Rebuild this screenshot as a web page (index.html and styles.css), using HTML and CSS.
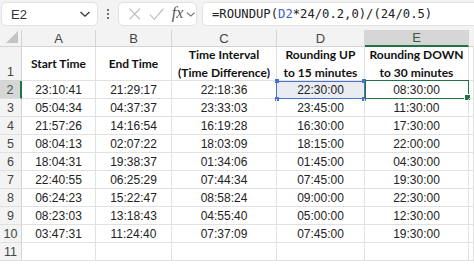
FILE: index.html
```html
<!DOCTYPE html>
<html>
<head>
<meta charset="utf-8">
<link rel="stylesheet" href="styles.css">
</head>
<body>
<div class="topbar">
  <div class="namebox">
    <span class="ref">E2</span>
    <svg class="chev" width="12" height="8" viewBox="0 0 12 8"><path d="M1.5 2 L6 6.2 L10.5 2" fill="none" stroke="#333" stroke-width="1.3"/></svg>
  </div>
  <div class="dots"><span></span><span></span><span></span></div>
  <div class="fxbox">
    <svg width="14" height="14" viewBox="0 0 14 14"><path d="M1.5 1.5 L12.5 12.5 M12.5 1.5 L1.5 12.5" stroke="#b5b5b5" stroke-width="1.1" fill="none"/></svg>
    <svg width="16" height="14" viewBox="0 0 16 14"><path d="M1 7.5 L5.5 12.5 L15 1.5" stroke="#b5b5b5" stroke-width="1.1" fill="none"/></svg>
    <span class="fx">fx</span>
    <svg class="chev2" width="10" height="7" viewBox="0 0 10 7"><path d="M1 1.5 L5 5.2 L9 1.5" fill="none" stroke="#666" stroke-width="1.1"/></svg>
  </div>
  <div class="formula">=ROUNDUP(<span class="blue">D2</span>*24/0.2,0)/(24/0.5)</div>
</div>
<div class="sheet">
  <div class="hd corner"><svg width="14" height="14" viewBox="0 0 14 14"><path d="M13 1 L13 13 L1 13 Z" fill="#c4c4c4"/></svg></div>
  <div class="hd col">A</div>
  <div class="hd col">B</div>
  <div class="hd col">C</div>
  <div class="hd col">D</div>
  <div class="hd col sel">E</div>
  <div class="hd col blank"></div>

  <div class="hd row r1">1</div>
  <div class="c h">Start Time</div>
  <div class="c h">End Time</div>
  <div class="c h">Time Interval<br>(Time Difference)</div>
  <div class="c h">Rounding UP<br>to 15 minutes</div>
  <div class="c h">Rounding DOWN<br>to 30 minutes</div>
  <div class="c"></div>

  <div class="hd row rsel">2</div>
  <div class="c">23:10:41</div><div class="c">21:29:17</div><div class="c">22:18:36</div>
  <div class="c dsel">22:30:00</div><div class="c esel">08:30:00</div><div class="c"></div>

  <div class="hd row">3</div>
  <div class="c">05:04:34</div><div class="c">04:37:37</div><div class="c">23:33:03</div>
  <div class="c">23:45:00</div><div class="c">11:30:00</div><div class="c"></div>

  <div class="hd row">4</div>
  <div class="c">21:57:26</div><div class="c">14:16:54</div><div class="c">16:19:28</div>
  <div class="c">16:30:00</div><div class="c">17:30:00</div><div class="c"></div>

  <div class="hd row">5</div>
  <div class="c">08:04:13</div><div class="c">02:07:22</div><div class="c">18:03:09</div>
  <div class="c">18:15:00</div><div class="c">22:00:00</div><div class="c"></div>

  <div class="hd row">6</div>
  <div class="c">18:04:31</div><div class="c">19:38:37</div><div class="c">01:34:06</div>
  <div class="c">01:45:00</div><div class="c">04:30:00</div><div class="c"></div>

  <div class="hd row">7</div>
  <div class="c">22:40:55</div><div class="c">06:25:29</div><div class="c">07:44:34</div>
  <div class="c">07:45:00</div><div class="c">19:30:00</div><div class="c"></div>

  <div class="hd row">8</div>
  <div class="c">06:24:23</div><div class="c">15:22:47</div><div class="c">08:58:24</div>
  <div class="c">09:00:00</div><div class="c">22:30:00</div><div class="c"></div>

  <div class="hd row">9</div>
  <div class="c">08:23:03</div><div class="c">13:18:43</div><div class="c">04:55:40</div>
  <div class="c">05:00:00</div><div class="c">12:30:00</div><div class="c"></div>

  <div class="hd row">10</div>
  <div class="c">03:47:31</div><div class="c">11:24:40</div><div class="c">07:37:09</div>
  <div class="c">07:45:00</div><div class="c">19:30:00</div><div class="c"></div>

  <div class="hd row">11</div>
  <div class="c"></div><div class="c"></div><div class="c"></div>
  <div class="c"></div><div class="c"></div><div class="c"></div>
</div>
</body>
</html>
```
FILE: styles.css
```css
html, body {
  margin: 0;
  padding: 0;
  background: #ffffff;
  overflow: hidden;
}
body {
  width: 474px;
  height: 265px;
  font-family: "Liberation Sans", Arial, sans-serif;
  color: #222;
}
.topbar {
  height: 30px;
  box-sizing: border-box;
  background: #f3f3f3;
  display: flex;
  align-items: flex-start;
  padding-top: 2px;
}
.namebox, .fxbox, .formula {
  height: 24px;
  box-sizing: border-box;
  background: #fff;
  border: 1px solid #e2e2e2;
  border-radius: 5px;
  display: flex;
  align-items: center;
}
.namebox {
  margin-left: 1px;
  width: 97px;
  padding: 0 6px 0 9px;
  justify-content: space-between;
  font-size: 13px;
  color: #333;
}
.dots {
  width: 20px;
  height: 24px;
  display: flex;
  flex-direction: column;
  align-items: center;
  justify-content: center;
  gap: 2px;
}
.dots span {
  width: 2px;
  height: 2px;
  background: #444;
  border-radius: 1px;
}
.fxbox {
  width: 79px;
  padding: 0 0 0 9px;
  gap: 8px;
}
.fx {
  font-family: "Liberation Serif", "Times New Roman", serif;
  font-style: italic;
  font-size: 16px;
  color: #555;
  margin-left: -1px;
  margin-top: -2px;
}
.chev2 { margin-left: -5px; }
.formula {
  margin-left: 5px;
  flex: 1;
  border-right: none;
  border-radius: 5px 0 0 5px;
  padding-left: 9px;
  font-family: "DejaVu Sans Mono", "Liberation Mono", monospace;
  font-size: 12.2px;
  color: #222;
  white-space: nowrap;
  overflow: hidden;
}
.blue { color: #3b63c9; }

.sheet {
  display: grid;
  grid-template-columns: 22px 74px 76px 105px 88px 104px 5px;
  grid-template-rows: 17px 34px repeat(10, 18px);
}
.hd {
  background: #f3f3f3;
  color: #444;
  box-sizing: border-box;
  border-right: 1px solid #d4d4d4;
  border-bottom: 1px solid #d4d4d4;
  font-size: 13px;
  display: flex;
  align-items: center;
  justify-content: center;
}
.corner {
  align-items: flex-end;
  justify-content: flex-end;
  padding: 0 2px 2px 0;
}
.col.sel {
  background: #d6d6d6;
  color: #3d5a48;
  border-bottom: 2px solid #217346;
}
.col.blank { border-right: none; }
.row {
  font-size: 12.5px;
  align-items: flex-end;
  padding-bottom: 1px;
  border-bottom-color: #e0e0e0;
}
.row.r1 { border-bottom-color: #d4d4d4; }
.row.rsel {
  background: #d6d6d6;
  color: #3d5a48;
  border-right: 2px solid #217346;
}
.c {
  box-sizing: border-box;
  border-right: 1px solid #e1e1e1;
  border-bottom: 1px solid #e1e1e1;
  font-size: 12px;
  display: flex;
  align-items: center;
  justify-content: center;
  text-align: center;
  white-space: nowrap;
  padding-top: 1px;
  position: relative;
}
.c.h {
  font-family: "Lato", "Liberation Sans", sans-serif;
  font-weight: 700;
  font-size: 12px;
  line-height: 18px;
  color: #111;
  padding-top: 0;
}
.dsel { background: #e9ecf3; }
.dsel::before {
  content: "";
  position: absolute;
  inset: 0 -1px -1px -1px;
  border: 1px solid #4a74c9;
}
.dsel::after {
  content: "";
  position: absolute;
  left: -2px;
  top: -2px;
  width: 4px;
  height: 4px;
  background: #4a74c9;
  box-shadow: 87px 0 0 #4a74c9, 0 18px 0 #4a74c9, 87px 18px 0 #4a74c9;
}
.esel::before {
  content: "";
  position: absolute;
  inset: -1px -1px -1px 0;
  border: 1.5px solid #217346;
}
.esel::after {
  content: "";
  position: absolute;
  right: -3px;
  bottom: -3px;
  width: 5px;
  height: 5px;
  background: #217346;
  border: 1px solid #fff;
}
```
